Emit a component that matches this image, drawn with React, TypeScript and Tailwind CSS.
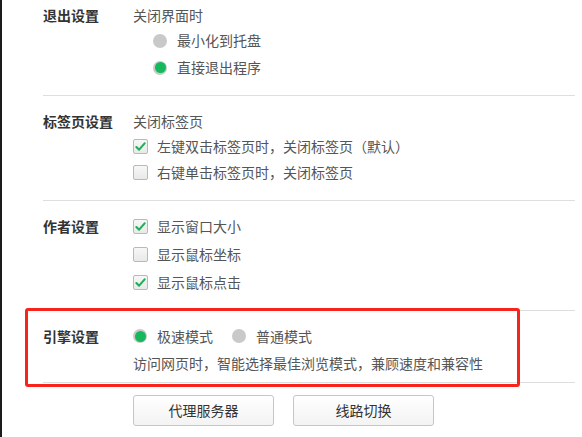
import React from 'react';

const font = { fontFamily: '"Noto Sans CJK SC", "Noto Sans", sans-serif' };

function Radio({ checked }: { checked?: boolean }) {
  return checked ? (
    <span className="flex h-[14px] w-[14px] items-center justify-center rounded-full bg-[#c9c9c9]">
      <span className="h-[11px] w-[11px] rounded-full bg-[#15b95c]" />
    </span>
  ) : (
    <span className="h-[14px] w-[14px] rounded-full bg-[#c9c9c9]" />
  );
}

function Checkbox({ checked }: { checked?: boolean }) {
  return (
    <span className="flex h-[15px] w-[15px] items-center justify-center rounded-[2px] border border-[#b9b9b9] bg-gradient-to-b from-[#f7f7f7] to-[#e9e9e9]">
      {checked && (
        <svg width="11" height="11" viewBox="0 0 12 12">
          <path d="M1.5 6.5 L4.5 9.5 L10.5 2.5" fill="none" stroke="#1cae55" strokeWidth="2.2" strokeLinecap="round" strokeLinejoin="round" />
        </svg>
      )}
    </span>
  );
}

function Section({ label, children, className }: { label: string; children: React.ReactNode; className: string }) {
  return (
    <div className={`flex border-b border-[#dedede] ${className}`}>
      <div className="flex h-[24px] w-[90px] shrink-0 items-center text-[14px] font-bold text-[#333]">{label}</div>
      <div className="flex-1">{children}</div>
    </div>
  );
}

export default function App() {
  const rowCb = 'flex items-center gap-[9px] text-[14px] text-[#555]';
  return (
    <div className="relative flex h-[437px] w-[582px] overflow-hidden bg-white" style={font}>
      <div className="w-[2px] shrink-0 bg-[#1b1b1b]" />
      <div className="ml-[41px] w-[532px]">
        {/* 退出设置 */}
        <Section label="退出设置" className="pt-[3px] pb-[14px]">
          <div className="flex h-[24px] items-center text-[14px] text-[#555]">关闭界面时</div>
          <div className="h-[27px] pl-[20px] flex items-center gap-[10px] text-[14px] text-[#555]">
            <Radio />
            最小化到托盘
          </div>
          <div className="h-[27px] pl-[20px] flex items-center gap-[10px] text-[14px] text-[#555]">
            <Radio checked />
            直接退出程序
          </div>
        </Section>

        {/* 标签页设置 */}
        <Section label="标签页设置" className="pt-[13px] pb-[14px]">
          <div className="flex h-[24px] items-center text-[14px] text-[#555]">关闭标签页</div>
          <div className={`h-[26px] ${rowCb}`}>
            <Checkbox checked />
            左键双击标签页时，关闭标签页（默认）
          </div>
          <div className={`h-[27px] ${rowCb}`}>
            <Checkbox />
            右键单击标签页时，关闭标签页
          </div>
        </Section>

        {/* 作者设置 */}
        <div className="flex border-b border-[#dedede] pt-[11px] pb-[14px]">
          <div className="flex h-[28px] w-[90px] shrink-0 items-center text-[14px] font-bold text-[#333]">作者设置</div>
          <div className="flex-1">
            <div className={`h-[28px] ${rowCb}`}>
              <Checkbox checked />
              显示窗口大小
            </div>
            <div className={`h-[28px] ${rowCb}`}>
              <Checkbox />
              显示鼠标坐标
            </div>
            <div className={`h-[28px] ${rowCb}`}>
              <Checkbox checked />
              显示鼠标点击
            </div>
          </div>
        </div>

        {/* 引擎设置 */}
        <div className="flex border-b border-[#dedede] pt-[11px] pb-[5px]">
          <div className="flex h-[28px] w-[90px] shrink-0 items-center text-[14px] font-bold text-[#333]">引擎设置</div>
          <div className="flex-1">
            <div className="flex h-[28px] items-center text-[14px] text-[#555]">
              <span className="flex items-center gap-[10px]">
                <Radio checked />
                极速模式
              </span>
              <span className="ml-[19px] flex items-center gap-[10px]">
                <Radio />
                普通模式
              </span>
            </div>
            <div className="flex h-[27px] items-center text-[14px] text-[#555]">
              访问网页时，智能选择最佳浏览模式，兼顾速度和兼容性
            </div>
          </div>
        </div>

        <div className="mt-[12px] flex gap-[19px] pl-[90px]">
          <button className="h-[31px] w-[141px] rounded-[3px] border border-[#c6c6c6] bg-gradient-to-b from-white to-[#f3f3f3] text-[14px] text-[#333]">
            代理服务器
          </button>
          <button className="h-[31px] w-[141px] rounded-[3px] border border-[#c6c6c6] bg-gradient-to-b from-white to-[#f3f3f3] text-[14px] text-[#333]">
            线路切换
          </button>
        </div>
      </div>

      {/* highlight frame */}
      <div className="pointer-events-none absolute left-[25px] top-[308px] h-[79px] w-[495px] rounded-[3px] border-[3px] border-[#f8231b]" />
    </div>
  );
}
